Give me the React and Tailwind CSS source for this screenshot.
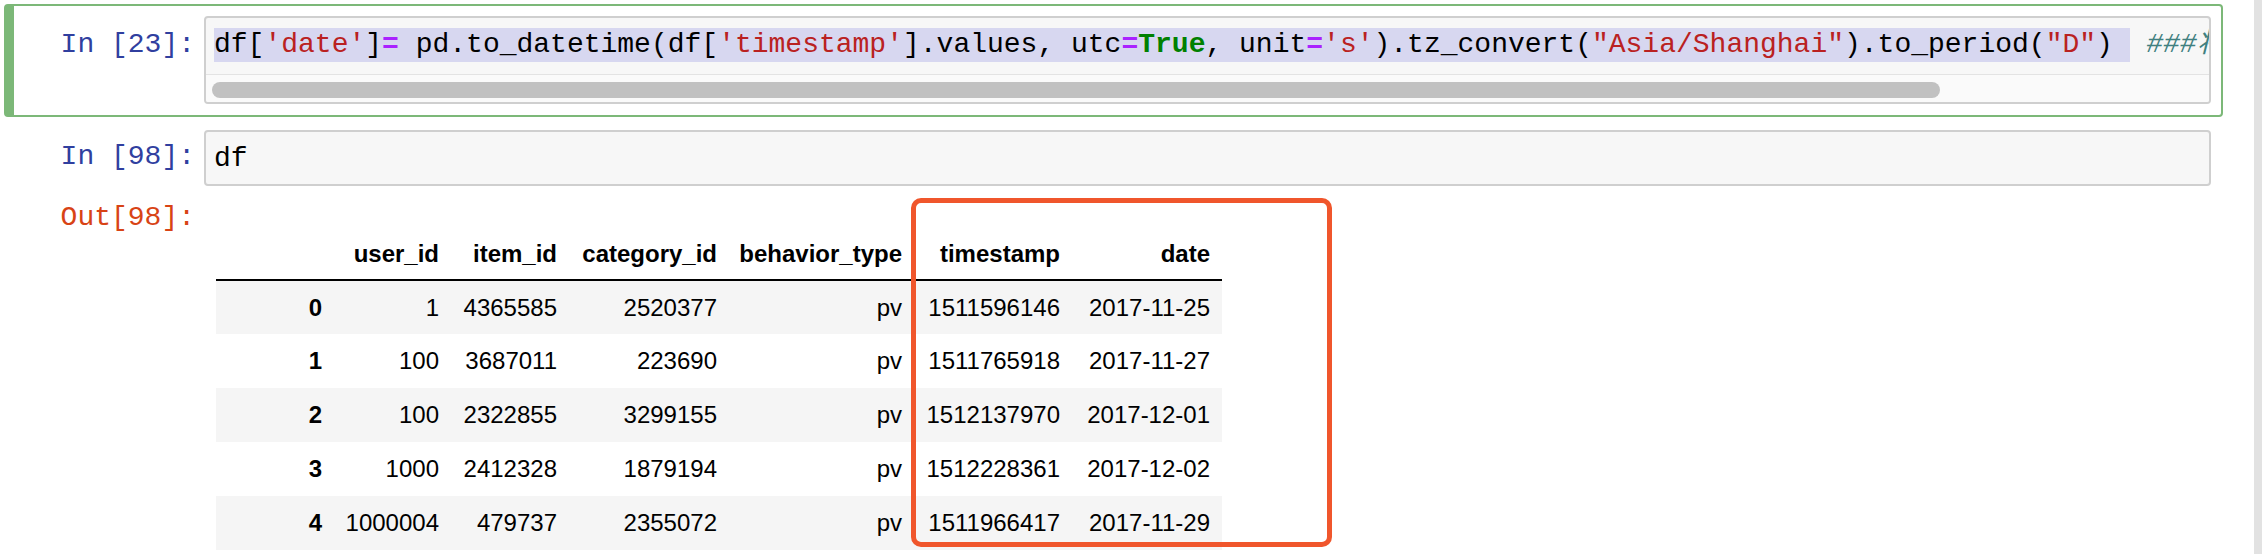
// Jupyter notebook: to_datetime cell + dataframe output with highlighted columns
const mono = "font-['Liberation_Mono','Noto_Sans_CJK_SC',monospace]"
const sans = "font-['Liberation_Sans',Arial,sans-serif]"

const COLS = [
  { key: 'idx', label: '', w: 'w-[118px]' },
  { key: 'user_id', label: 'user_id', w: 'w-[117px]' },
  { key: 'item_id', label: 'item_id', w: 'w-[118px]' },
  { key: 'category_id', label: 'category_id', w: 'w-[160px]' },
  { key: 'behavior_type', label: 'behavior_type', w: 'w-[185px]' },
  { key: 'timestamp', label: 'timestamp', w: 'w-[158px]' },
  { key: 'date', label: 'date', w: 'w-[150px]' },
]

const ROWS = [
  ['0', '1', '4365585', '2520377', 'pv', '1511596146', '2017-11-25'],
  ['1', '100', '3687011', '223690', 'pv', '1511765918', '2017-11-27'],
  ['2', '100', '2322855', '3299155', 'pv', '1512137970', '2017-12-01'],
  ['3', '1000', '2412328', '1879194', 'pv', '1512228361', '2017-12-02'],
  ['4', '1000004', '479737', '2355072', 'pv', '1511966417', '2017-11-29'],
]

function Str({ children }) {
  return <span className="text-[#ba2121]">{children}</span>
}
function Op({ children }) {
  return <span className="text-[#aa22ff] font-bold">{children}</span>
}

function Prompt({ children, out }) {
  return (
    <div className={`w-[190px] shrink-0 pr-[9px] text-right leading-[34px] text-[28px] whitespace-pre ${mono} ${out ? 'text-[#d84315]' : 'text-[#303f9f]'}`}>
      {children}
    </div>
  )
}

export default function App() {
  return (
    <div className="relative flex w-[2262px] h-[554px] overflow-hidden bg-white">
      <div className="flex-1 pl-[4px] pt-[4px]">
        {/* cell 1, selected in edit mode */}
        <div className="flex w-[2219px] border-2 border-l-[10px] border-[#7cb878] rounded-[4px] pt-[10px] pr-[10px] pb-[11px]">
          <div className="pt-[12px]"><Prompt>In [23]:</Prompt></div>
          <div className="flex-1 min-w-0 border-2 border-[#cfcfcf] rounded-[4px] bg-[#f7f7f7] overflow-hidden">
            <div className={`pl-[8px] pt-[10px] pb-[12px] text-[28px] leading-[34px] whitespace-pre overflow-hidden text-black ${mono}`}>
              <span className="inline-block bg-[#d7d7f0]">
                df[<Str>'date'</Str>]<Op>=</Op> pd.to_datetime(df[<Str>'timestamp'</Str>].values, utc<Op>=</Op><span className="text-[#008000] font-bold">True</span>, unit<Op>=</Op><Str>'s'</Str>).tz_convert(<Str>"Asia/Shanghai"</Str>).to_period(<Str>"D"</Str>){' '}
              </span>
              {' '}<span className="italic text-[#408080]">###将时间戳转换为日期</span>
            </div>
            <div className="border-t border-[#e3e3e3] bg-[#fafafa] h-[28px] pt-[7px] pl-[6px]">
              <div className="w-[1728px] h-[16px] rounded-full bg-[#c1c1c1]" />
            </div>
          </div>
        </div>

        {/* cell 2 */}
        <div className="w-[2219px] border-2 border-l-[10px] border-transparent pt-[11px] pr-[10px]">
          <div className="flex">
            <div className="pt-[10px]"><Prompt>In [98]:</Prompt></div>
            <div className="flex-1 border-2 border-[#cfcfcf] rounded-[4px] bg-[#f7f7f7]">
              <div className={`pl-[8px] pt-[10px] pb-[8px] text-[28px] leading-[34px] text-black ${mono}`}>df</div>
            </div>
          </div>

          <div className="flex mt-[15px]">
            <Prompt out>Out[98]:</Prompt>
            <div className="pt-[28px] pl-[12px]">
              <table className={`table-fixed border-collapse text-[24px] text-black ${sans}`}>
                <thead>
                  <tr className="h-[51px] border-b-2 border-black">
                    {COLS.map(c => (
                      <th key={c.key} className={`${c.w} p-0 pr-[12px] text-right font-bold align-middle`}>{c.label}</th>
                    ))}
                  </tr>
                </thead>
                <tbody>
                  {ROWS.map((r, i) => (
                    <tr key={r[0]} className={`h-[54px] ${i % 2 === 0 ? 'bg-[#f5f5f5]' : 'bg-white'}`}>
                      {r.map((v, j) => j === 0
                        ? <th key={j} className="p-0 pr-[12px] text-right font-bold align-middle">{v}</th>
                        : <td key={j} className="p-0 pr-[12px] text-right align-middle">{v}</td>
                      )}
                    </tr>
                  ))}
                </tbody>
              </table>
            </div>
          </div>
        </div>
      </div>

      {/* page scrollbar gutter */}
      <div className="w-[8px] h-full bg-[#e2e2e2]" />

      {/* annotation around timestamp/date */}
      <div className="absolute left-[911px] top-[198px] w-[421px] h-[349px] border-[5px] border-[#f0562c] rounded-[10px] pointer-events-none" />
    </div>
  )
}
